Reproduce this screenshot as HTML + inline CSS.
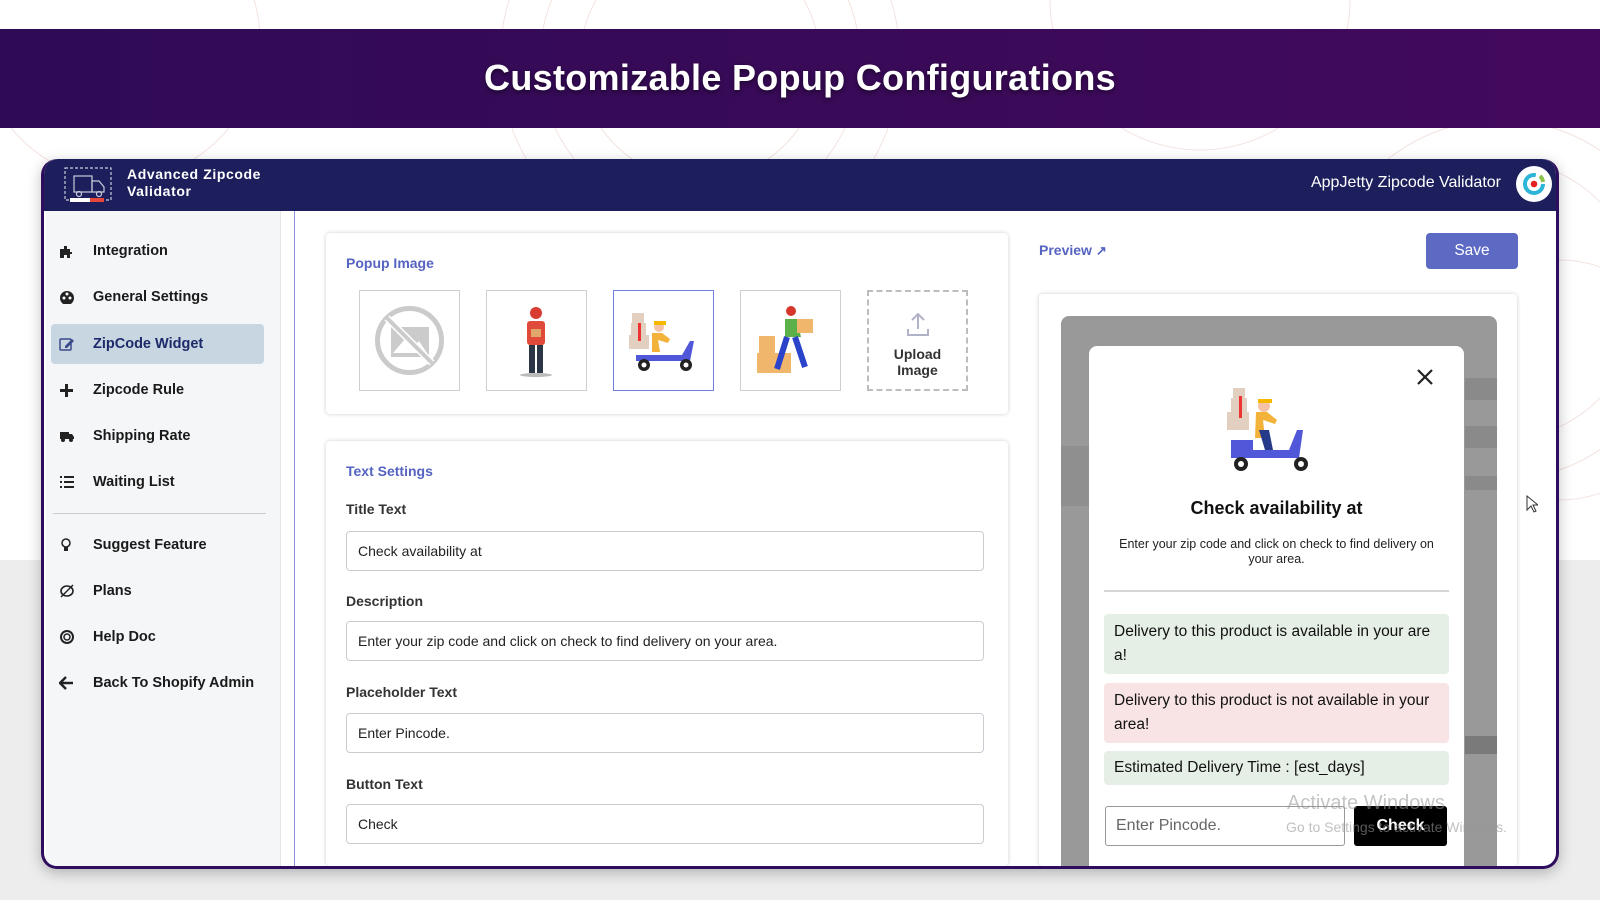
<!DOCTYPE html>
<html><head><meta charset="utf-8">
<style>
*{box-sizing:border-box;margin:0;padding:0}
html,body{width:1600px;height:900px;overflow:hidden}
body{position:relative;font-family:"Liberation Sans",Arial,sans-serif;background:#fff}
.abs{position:absolute}
.bgbot{left:0;top:560px;width:1600px;height:340px;background:#ededed}
.banner{left:0;top:29px;width:1600px;height:99px;background:linear-gradient(90deg,#2f0b55,#3a0a58 60%,#43095e);color:#fff;font-size:36px;font-weight:bold;text-align:center;line-height:97px;text-shadow:0 2px 4px rgba(0,0,0,.5);letter-spacing:.3px}
.card{left:41px;top:159px;width:1518px;height:710px;border:3px solid #2e0d5e;border-top:none;border-radius:16px;background:#fff;overflow:hidden;box-shadow:0 4px 14px rgba(0,0,0,.25)}
.hdr{left:0;top:0;width:100%;height:52px;background:#1d1f5c;border-radius:14px 14px 0 0}
.side{left:2px;top:52px;width:235px;height:655px;background:#f4f6f8;border-right:1px solid #e4e6ea}
.item{position:absolute;left:0;width:235px;height:40px;font-size:14.5px;font-weight:bold;color:#1a1a1a;line-height:40px}
.item span.t{position:absolute;left:47px}
.item .ic{position:absolute;left:13px;top:13px;width:16px;height:14px}
.panel{background:#fff;border-radius:4px;box-shadow:0 0 4px rgba(0,0,0,.2);overflow:hidden}
.lbl{position:absolute;left:20px;font-size:14px;font-weight:bold;color:#333}
.inp{position:absolute;left:20px;width:638px;height:40px;border:1px solid #c9ccd1;border-radius:4px;font-size:14px;color:#222;line-height:38px;padding-left:11px}
.thumb{position:absolute;top:57px;width:101px;height:101px;border:1px solid #cfcfcf;background:#fff}
.msg{position:absolute;left:15px;width:345px;border-radius:4px;font-size:15.5px;color:#111;padding:6px 10px;line-height:24px}
</style></head><body>
<svg class="abs" style="left:0;top:0" width="1600" height="560">
<g fill="none" stroke="#f3e3e0" stroke-width="1">
<circle cx="700" cy="60" r="120"/><circle cx="700" cy="60" r="160"/><circle cx="700" cy="60" r="200"/>
<circle cx="1500" cy="300" r="140"/><circle cx="1500" cy="300" r="180"/><circle cx="1560" cy="380" r="120"/>
<circle cx="120" cy="40" r="140"/><circle cx="1200" cy="0" r="150"/>
</g></svg>
<div class="abs bgbot"></div>
<div class="abs banner">Customizable Popup Configurations</div>

<div class="abs card">
 <div class="abs hdr">
  <svg class="abs" style="left:18px;top:5px" width="52" height="40" viewBox="0 0 52 40"><g fill="none" stroke="#c9ccdc" stroke-width="1.2"><rect x="3" y="4" width="46" height="32" stroke-dasharray="3 2"/><rect x="12" y="12" width="18" height="16"/><path d="M30 17h7l5 6v5H30z"/><circle cx="17" cy="30" r="2.5"/><circle cx="37" cy="30" r="2.5"/></g><rect x="8" y="34" width="20" height="4" fill="#fff"/><rect x="28" y="34" width="14" height="4" fill="#e8473b"/></svg>
  <div class="abs" style="left:83px;top:7px;color:#fff;font-size:14px;font-weight:bold;line-height:17px;letter-spacing:.6px">Advanced Zipcode<br>Validator</div>
  <div class="abs" style="right:55px;top:15px;color:#fff;font-size:16px">AppJetty Zipcode Validator</div>
  <div class="abs" style="right:4px;top:7px;width:36px;height:36px;border-radius:50%;background:#fff"></div>
  <svg class="abs" style="right:9px;top:12px" width="26" height="26" viewBox="0 0 26 26"><circle cx="13" cy="13" r="9" fill="none" stroke="#2bb5d6" stroke-width="4" stroke-dasharray="44 13"/><path d="M19 5a9 9 0 0 1 3 6" stroke="#8bc34a" stroke-width="4" fill="none"/><circle cx="13" cy="13" r="3.3" fill="#e52020"/></svg>
 </div>
 <div class="abs side">
  <div class="item" style="top:20px"><svg class="ic" viewBox="0 0 16 14"><path d="M1 5h4V2h3v3h3v3h2v2h-2v4H8v-3H5v3H1z" fill="#222"/></svg><span class="t">Integration</span></div>
  <div class="item" style="top:66px"><svg class="ic" viewBox="0 0 16 14"><circle cx="8" cy="8" r="7" fill="#222"/><circle cx="5" cy="8" r="1.5" fill="#fff"/><circle cx="8" cy="4" r="1.5" fill="#fff"/><circle cx="11" cy="8" r="1.5" fill="#fff"/></svg><span class="t">General Settings</span></div>
  <div class="item" style="top:113px;left:5px;width:213px;background:#c8d6e2;border-radius:4px;color:#1d2a6a"><svg class="ic" style="left:8px" viewBox="0 0 16 14"><rect x="1" y="2" width="11" height="11" rx="1" fill="none" stroke="#3b4a8a" stroke-width="1.5"/><path d="M6 9l7-7 2 2-7 7H6z" fill="#3b4a8a"/></svg><span class="t" style="left:42px">ZipCode Widget</span></div>
  <div class="item" style="top:159px"><svg class="ic" viewBox="0 0 16 14"><path d="M6 1h3v5h5v3H9v5H6V9H1V6h5z" fill="#222"/></svg><span class="t">Zipcode Rule</span></div>
  <div class="item" style="top:205px"><svg class="ic" viewBox="0 0 16 14"><path d="M1 3h9v7H1zM10 5h3l2 3v2h-5z" fill="#222"/><circle cx="4" cy="11" r="2" fill="#222"/><circle cx="12" cy="11" r="2" fill="#222"/></svg><span class="t">Shipping Rate</span></div>
  <div class="item" style="top:251px"><svg class="ic" viewBox="0 0 16 14"><g fill="#222"><rect x="1" y="1" width="2" height="2"/><rect x="5" y="1" width="10" height="2"/><rect x="1" y="6" width="2" height="2"/><rect x="5" y="6" width="10" height="2"/><rect x="1" y="11" width="2" height="2"/><rect x="5" y="11" width="10" height="2"/></g></svg><span class="t">Waiting List</span></div>
  <div class="abs" style="left:7px;top:302px;width:213px;height:1px;background:#c9ccd1"></div>
  <div class="item" style="top:314px"><svg class="ic" viewBox="0 0 16 14"><circle cx="7" cy="5" r="4" fill="none" stroke="#222" stroke-width="1.5"/><rect x="5" y="9" width="4" height="4" fill="#222"/></svg><span class="t">Suggest Feature</span></div>
  <div class="item" style="top:360px"><svg class="ic" viewBox="0 0 16 14"><ellipse cx="8" cy="7" rx="6" ry="5" fill="none" stroke="#222" stroke-width="1.6"/><path d="M2 13L14 1" stroke="#222" stroke-width="1.4"/></svg><span class="t">Plans</span></div>
  <div class="item" style="top:406px"><svg class="ic" viewBox="0 0 16 14"><circle cx="8" cy="7" r="6" fill="none" stroke="#222" stroke-width="2"/><circle cx="8" cy="7" r="3" fill="none" stroke="#222" stroke-width="1.5"/></svg><span class="t">Help Doc</span></div>
  <div class="item" style="top:452px"><svg class="ic" viewBox="0 0 16 14"><path d="M7 1L1 7l6 6M1 7h13" stroke="#222" stroke-width="2.4" fill="none"/></svg><span class="t">Back To Shopify Admin</span></div>
 </div>
 <div class="abs" style="left:250px;top:52px;width:1px;height:655px;background:#8b93e0"></div>

 <div class="abs panel" style="left:282px;top:74px;width:682px;height:181px">
  <div class="abs" style="left:20px;top:22px;font-size:14px;font-weight:bold;color:#5563c1">Popup Image</div>
  <div class="thumb" style="left:33px"><svg width="99" height="99" viewBox="0 0 99 99"><circle cx="49.5" cy="49.5" r="32" fill="none" stroke="#cbcbcb" stroke-width="5"/><path d="M31 36h38v30H31z" fill="#cbcbcb"/><path d="M33 62l12-14 8 8 6-6 8 12z" fill="#fff"/><path d="M27 27l45 45" stroke="#fff" stroke-width="7"/><path d="M27 27l45 45" stroke="#cbcbcb" stroke-width="4"/></svg></div>
  <div class="thumb" style="left:160px"><svg width="99" height="99" viewBox="0 0 99 99"><circle cx="49" cy="22" r="6" fill="#d83b2f"/><rect x="40" y="30" width="18" height="24" rx="3" fill="#e04a3a"/><rect x="44" y="38" width="10" height="8" fill="#e0a86b"/><rect x="42" y="54" width="6" height="28" fill="#2b3545"/><rect x="50" y="54" width="6" height="28" fill="#2b3545"/><ellipse cx="49" cy="84" rx="16" ry="2" fill="#bbb"/></svg></div>
  <div class="thumb" style="left:287px;border-color:#6f7ee0"><svg width="99" height="99" viewBox="0 0 99 99"><rect x="18" y="22" width="12" height="10" fill="#e3cfc0"/><rect x="17" y="32" width="15" height="12" fill="#e3cfc0"/><rect x="15" y="44" width="20" height="14" fill="#e3cfc0"/><rect x="24" y="32" width="3" height="18" fill="#e33"/><circle cx="45" cy="36" r="5" fill="#f6c2a7"/><path d="M40 32h12" stroke="#f5b800" stroke-width="4"/><path d="M38 42h10l8 6-2 4-10-3 2 12h-8z" fill="#f3b23a"/><path d="M22 64h46l8-14h4l-4 20H22z" fill="#5057d8"/><circle cx="30" cy="74" r="6" fill="#222"/><circle cx="72" cy="74" r="6" fill="#222"/><circle cx="30" cy="74" r="2.5" fill="#fff"/><circle cx="72" cy="74" r="2.5" fill="#fff"/></svg></div>
  <div class="thumb" style="left:414px"><svg width="99" height="99" viewBox="0 0 99 99"><rect x="18" y="45" width="16" height="17" fill="#f0b66b"/><rect x="16" y="62" width="18" height="20" fill="#f0b66b"/><rect x="34" y="62" width="16" height="20" fill="#f0b66b"/><circle cx="50" cy="20" r="5" fill="#d7372a"/><path d="M44 28h12l4 18H44z" fill="#5bb04a"/><rect x="56" y="28" width="16" height="14" fill="#f0b66b"/><path d="M46 46l-10 32M54 46l10 30" stroke="#2a43c9" stroke-width="6"/></svg></div>
  <div class="thumb" style="left:541px;border:2px dashed #bdbdbd;text-align:center;font-size:14px;font-weight:bold;color:#333;line-height:16px"><svg style="display:block;margin:20px auto 8px" width="24" height="26" viewBox="0 0 24 26"><path d="M12 2v15M6 8l6-6 6 6M2 17v6h20v-6" fill="none" stroke="#b0b3c8" stroke-width="2"/></svg>Upload<br>Image</div>
 </div>

 <div class="abs panel" style="left:282px;top:282px;width:682px;height:425px">
  <div class="abs" style="left:20px;top:22px;font-size:14px;font-weight:bold;color:#5563c1">Text Settings</div>
  <div class="lbl" style="top:60px">Title Text</div>
  <div class="inp" style="top:90px">Check availability at</div>
  <div class="lbl" style="top:152px">Description</div>
  <div class="inp" style="top:180px">Enter your zip code and click on check to find delivery on your area.</div>
  <div class="lbl" style="top:243px">Placeholder Text</div>
  <div class="inp" style="top:272px">Enter Pincode.</div>
  <div class="lbl" style="top:335px">Button Text</div>
  <div class="inp" style="top:363px">Check</div>
 </div>

 <div class="abs" style="left:995px;top:83px;font-size:14px;font-weight:bold;color:#5563c1">Preview <span style="font-size:13px">&#x2197;</span></div>
 <div class="abs" style="left:1382px;top:74px;width:92px;height:36px;background:#5c6ac4;border-radius:4px;color:#fff;font-size:15.5px;text-align:center;line-height:36px">Save</div>

 <div class="abs panel" style="left:995px;top:135px;width:478px;height:572px">
  <div class="abs" style="left:22px;top:22px;width:436px;height:560px;background:#999;border-radius:8px;overflow:hidden">
   <div class="abs" style="left:0;top:130px;width:30px;height:60px;background:#8f8f8f"></div>
   <div class="abs" style="left:404px;top:62px;width:32px;height:22px;background:#8a8a8a"></div>
   <div class="abs" style="left:404px;top:110px;width:32px;height:22px;background:#8a8a8a"></div>
   <div class="abs" style="left:404px;top:160px;width:32px;height:14px;background:#8a8a8a"></div>
   <div class="abs" style="left:404px;top:420px;width:32px;height:18px;background:#7a7a7a"></div>
   <div class="abs" style="left:28px;top:30px;width:375px;height:560px;background:#fff;border-radius:8px">
    <svg class="abs" style="left:327px;top:22px" width="18" height="18" viewBox="0 0 18 18"><path d="M2 2l14 14M16 2L2 16" stroke="#222" stroke-width="2.2"/></svg>
    <svg class="abs" style="left:130px;top:38px" width="100" height="95" viewBox="0 0 100 95"><rect x="14" y="4" width="12" height="10" fill="#e3cfc0"/><rect x="12" y="14" width="16" height="14" fill="#e3cfc0"/><rect x="8" y="28" width="22" height="18" fill="#e3cfc0"/><rect x="20" y="12" width="3" height="22" fill="#e33"/><circle cx="45" cy="22" r="6" fill="#f6c2a7"/><path d="M39 17h14" stroke="#f5b800" stroke-width="4"/><path d="M37 28h11l10 8-2 4-12-4 2 18h-10z" fill="#f3b23a"/><path d="M40 46h10l4 20h-8z" fill="#263a8a"/><path d="M12 56h22v10h36l8-20h6l-4 28H12z" fill="#5057d8"/><circle cx="22" cy="80" r="7" fill="#222"/><circle cx="82" cy="80" r="7" fill="#222"/><circle cx="22" cy="80" r="3" fill="#fff"/><circle cx="82" cy="80" r="3" fill="#fff"/></svg>
    <div class="abs" style="left:0;top:152px;width:375px;text-align:center;font-size:18px;font-weight:bold;color:#111">Check availability at</div>
    <div class="abs" style="left:20px;top:191px;width:335px;text-align:center;font-size:12.5px;color:#222;line-height:15px">Enter your zip code and click on check to find delivery on your area.</div>
    <div class="abs" style="left:15px;top:244px;width:345px;height:2px;background:#d5d5d5"></div>
    <div class="msg" style="top:268px;background:#e6efe6">Delivery to this product is available in your are a!</div>
    <div class="msg" style="top:337px;background:#f8e4e4">Delivery to this product is not available in your area!</div>
    <div class="msg" style="top:405px;background:#e6efe6;padding:5px 10px">Estimated Delivery Time : [est_days]</div>
    <div class="abs" style="left:16px;top:460px;width:240px;height:40px;border:1px solid #999;border-radius:3px;font-size:16px;color:#666;line-height:38px;padding-left:10px">Enter Pincode.</div>
    <div class="abs" style="left:265px;top:460px;width:93px;height:40px;background:#000;border-radius:3px;color:#fff;font-size:16px;font-weight:bold;text-align:center;line-height:40px">Check</div>
   </div>
  </div>
 </div>
</div>
<div class="abs" style="left:1287px;top:792px;font-size:20px;color:rgba(150,150,150,.55)">Activate Windows</div>
<div class="abs" style="left:1286px;top:819px;font-size:14px;color:rgba(150,150,150,.6)">Go to Settings to activate Windows.</div>
<svg class="abs" style="left:1526px;top:495px" width="12" height="18" viewBox="0 0 12 18"><path d="M1 1v14l4-4 3 6 2-1-3-6h5z" fill="#fff" stroke="#333"/></svg>
</body></html>
